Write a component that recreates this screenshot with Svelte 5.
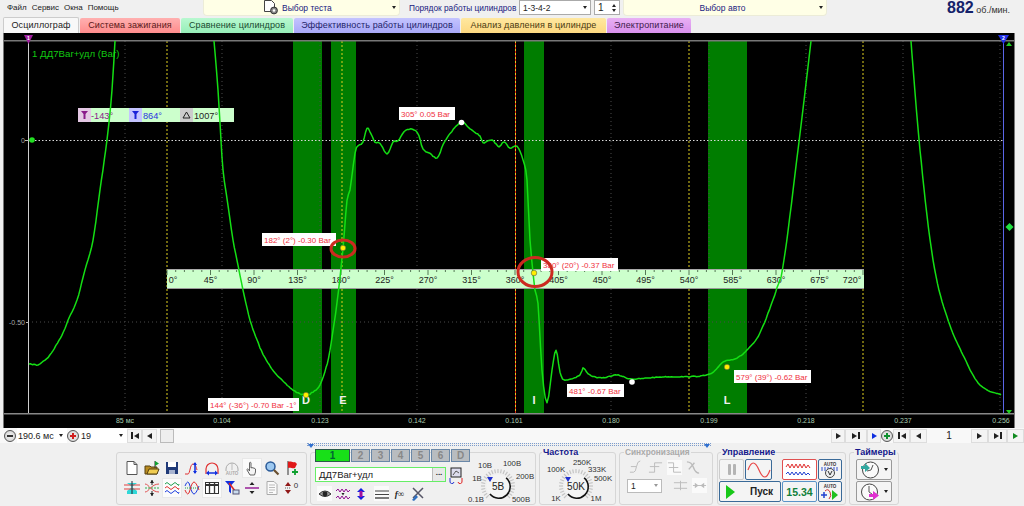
<script>
  const tabs = [
    { name: 'Осциллограф', cls: 't-active', w: 76 },
    { name: 'Система зажигания', cls: 't-red', w: 100 },
    { name: 'Сравнение цилиндров', cls: 't-green', w: 112 },
    { name: 'Эффективность работы цилиндров', cls: 't-blue', w: 166 },
    { name: 'Анализ давления в цилиндре', cls: 't-yellow', w: 145 },
    { name: 'Электропитание', cls: 't-violet', w: 84 }
  ];

  // trace in page coordinates, one list per visible piece
  const pieces = [
    [[29, 364], [34, 364.500], [38, 365], [42, 362], [50, 355], [63, 333], [68, 320], [77, 300], [85, 270], [93, 240], [100, 190], [107, 140], [112, 90], [115, 41]],
    [[214, 41], [218, 90], [221, 140], [223, 170], [228, 205], [233, 240], [237, 260], [243, 290], [250, 320], [257, 340], [265, 358], [277, 375],
      [293, 390], [305, 395], [313, 392], [320, 385], [326, 368], [330, 350], [337, 303], [343, 248], [347, 200], [350, 190], [355, 153], [358, 146], [363, 142],
      [367, 128], [371, 134], [375, 142], [380, 143], [387, 154], [393, 142], [398, 141], [406, 130], [417, 132], [423, 149], [430, 153],
      [437, 158], [443, 145], [446, 140], [452, 131], [462, 122], [470, 129], [480, 136], [483, 143], [492, 140], [499, 147], [504, 142],
      [510, 148], [517, 146], [523, 160], [527, 180], [530, 240], [535, 290], [538, 303], [542, 370], [547, 403], [552, 370], [556, 350],
      [560, 372], [565, 380], [580, 375], [583, 368], [590, 375], [602, 378], [617, 375], [632, 379], [660, 377], [707, 375], [723, 362],
      [737, 358], [747, 350], [760, 333], [777, 288], [784, 260], [798, 150], [811, 41]],
    [[911, 41], [920, 150], [933, 260], [947, 317], [963, 355], [980, 385], [1001, 395]]
  ];

  let seed = 7;
  function rnd() {
    seed = (seed * 16807) % 2147483647;
    return seed / 2147483647 - 0.5;
  }

  // catmull-rom through the points, a little jitter for the sensor noise
  function smooth(pts) {
    let d = `M${pts[0][0]} ${pts[0][1]}`;
    for (let i = 0; i < pts.length - 1; i++) {
      const p0 = pts[Math.max(i - 1, 0)];
      const p1 = pts[i];
      const p2 = pts[i + 1];
      const p3 = pts[Math.min(i + 2, pts.length - 1)];
      const n = Math.max(2, Math.round((p2[0] - p1[0]) / 1.5));
      for (let k = 1; k <= n; k++) {
        const t = k / n;
        const f = (a, b, c, e) =>
          0.5 * (2 * b + (c - a) * t + (2 * a - 5 * b + 4 * c - e) * t * t + (3 * b - a - 3 * c + e) * t * t * t);
        const x = f(p0[0], p1[0], p2[0], p3[0]);
        const y = f(p0[1], p1[1], p2[1], p3[1]) + rnd() * 0.8;
        d += `L${x.toFixed(1)} ${y.toFixed(1)}`;
      }
    }
    return d;
  }
  const wave = pieces.map(smooth).join('');

  const bands = [
    { x: 293, w: 29, l: 'D', lx: 306 },
    { x: 331, w: 25, l: 'E', lx: 343 },
    { x: 524, w: 20, l: 'I', lx: 534 },
    { x: 708, w: 39, l: 'L', lx: 727 }
  ];
  const grid = [125, 222, 320, 417, 611, 709, 806, 903, 1000];
  const yellow = [167, 342, 689, 863];
  const times = [
    [125, '85 мс'], [222, '0.104'], [320, '0.123'], [417, '0.142'], [514, '0.161'],
    [611, '0.180'], [709, '0.199'], [806, '0.218'], [903, '0.237'], [1001, '0.256']
  ];
  const tips = [
    { x: 399, y: 107, w: 56, t: '305° 0.05 Bar' },
    { x: 262, y: 233, w: 74, t: '182° (2°) -0.30 Bar' },
    { x: 541, y: 258, w: 77, t: '380° (20°) -0.37 Bar' },
    { x: 208, y: 398, w: 91, t: '144° (-36°) -0.70 Bar -1°' },
    { x: 567, y: 384, w: 57, t: '481° -0.67 Bar' },
    { x: 734, y: 370, w: 77, t: '579° (39°) -0.62 Bar' }
  ];
  const degs = Array.from({ length: 17 }, (_, i) => i * 45);
  const minorTicks = Array.from({ length: 81 }, (_, i) => 167 + i * 8.7);
  const channels = ['1', '2', '3', '4', '5', '6', 'D'];

  const voltLabels = [
    [21, 16, '10В'], [48, 14, '100В'], [61, 27, '200В'], [57, 50, '500В'], [12, 50, '0.1В'], [13, 29, '1В']
  ];
  const freqLabels = [
    [16, 20, '100K'], [42, 13, '250K'], [57, 20, '333K'], [63, 29, '500K'], [56, 49, '1M'], [16, 49, '1K']
  ];
  const knobTicks = Array.from({ length: 25 }, (_, i) => (i * 270) / 24 - 225);
  const rad = (a) => (a * Math.PI) / 180;
</script>

{#snippet knob(cx, cy, labels, value)}
  <svg class="knob" width="74" height="53" viewBox="0 0 74 53">
    {#each knobTicks as a}
      <line x1={cx + 13 * Math.cos(rad(a))} y1={cy + 13 * Math.sin(rad(a))} x2={cx + 17 * Math.cos(rad(a))} y2={cy + 17 * Math.sin(rad(a))} stroke="#c4c4c4" stroke-width="1.2" />
    {/each}
    <circle {cx} {cy} r="11.5" fill="#f4f4f4" />
    <path d="M{cx + 8.1} {cy - 8.1}A11.5 11.5 0 1 1 {cx - 8.1} {cy + 8.1}" fill="none" stroke="#111" stroke-width="1.6" />
    <path d="M{cx - 11} {cy - 9}h6l-3 5z" fill="#2030d0" />
    <text x={cx} y={cy + 4} class="kv">{value}</text>
    {#each labels as l}
      <text x={l[0]} y={l[1]} class="kl">{l[2]}</text>
    {/each}
  </svg>
{/snippet}

<div class="app">
  <header class="topbar">
    <nav class="menu">
      <span>Файл</span><span>Сервис</span><span>Окна</span><span>Помощь</span>
    </nav>
    <div class="ysel test">
      <svg width="17" height="15" viewBox="0 0 17 15">
        <path d="M1.500 .5h7l3 3v8h-10z" fill="#fff" stroke="#444" />
        <circle cx="11" cy="10.500" r="3.400" fill="#888" stroke="#333" />
        <circle cx="11" cy="10.500" r="1.200" fill="#fff" />
      </svg>
      <span class="ytext">Выбор теста</span>
      <i class="caret"></i>
    </div>
    <span class="order">Порядок работы цилиндров</span>
    <div class="combo order-combo"><span>1-3-4-2</span><i class="caret"></i></div>
    <div class="combo spin"><span>1</span><b class="arrows"><i class="up"></i><i class="caret"></i></b></div>
    <div class="ysel carsel">
      <span class="ytext centered">Выбор авто</span>
      <i class="caret"></i>
    </div>
    <div class="rpm"><strong>882</strong> <span>об./мин.</span></div>
  </header>

  <div class="tabs">
    {#each tabs as tab}
      <div class="tab {tab.cls}" style:width="{tab.w}px">{tab.name}</div>
    {/each}
  </div>

  <div class="scope">
    <svg width="1024" height="395" viewBox="0 33 1024 395">
      <rect x="3" y="33" width="1012" height="395" fill="#000" />
      <rect x="3" y="33" width="1" height="395" fill="#777" />
      <rect x="1014" y="33" width="1" height="395" fill="#777" />
      {#each bands as b}
        <rect x={b.x} y="41" width={b.w} height="372" fill="#007d00" />
      {/each}
      {#each grid as x}
        <line x1={x} y1="41" x2={x} y2="413" class="griddot" />
      {/each}
      <line x1="28" y1="322" x2="1003" y2="322" class="griddot" />
      {#each yellow as x}
        <line x1={x} y1="41" x2={x} y2="413" class="ydash" />
      {/each}
      <line x1="515.500" y1="41" x2="515.500" y2="413" stroke="#e02010" />
      <line x1="515.500" y1="41" x2="515.500" y2="413" class="ydash" />
      <line x1="28" y1="140.500" x2="1003" y2="140.500" class="zero" />

      <rect x="4" y="40" width="1010" height="1.500" fill="#777" />
      <rect x="4" y="413" width="1010" height="1.500" fill="#888" />
      <line x1="28.500" y1="41" x2="28.500" y2="413" stroke="#cfcfcf" />
      <line x1="1003.500" y1="41" x2="1003.500" y2="413" stroke="#5a66e8" />
      <path d="M24 35h9l-4.500 9z" fill="#a020a0" />
      <text x="28.500" y="39.500" class="flag">1</text>
      <path d="M998 35h11l-5.500 9z" fill="#2030e8" />
      <text x="1003.500" y="39.500" class="flag">2</text>
      <path d="M1006 46l3-4 3 4z" fill="#20d020" />
      <path d="M1006 410l3 4 3-4z" fill="#20d020" />
      <path d="M1009.500 223l4 4-4 4-4-4z" fill="#20e040" />

      <path d="M25 140.500h4M26 322.500h3" stroke="#bbb" />
      <text x="25" y="143" class="axis">0</text>
      <text x="25" y="325" class="axis">-0.50</text>
      <circle cx="32" cy="140" r="2.800" fill="#22e022" />
      <text x="32" y="57" class="title">1 ДД7Bar+удл (Bar)</text>

      <g class="measure">
        <rect x="78" y="108" width="156" height="14" fill="#ccffcc" />
        <rect x="78" y="108" width="13" height="14" fill="#e4c8e4" />
        <rect x="129" y="108" width="13" height="14" fill="#c4c4ff" />
        <rect x="180" y="108" width="13" height="14" fill="#cccccc" />
        <path d="M81 111h7l-2.500 3v5h-2v-5z" fill="#8a1a8a" />
        <path d="M132 111h7l-2.500 3v5h-2v-5z" fill="#1a22d8" />
        <path d="M186.500 112l3.500 6h-7z" fill="none" stroke="#222" />
        <text x="91" y="119" fill="#8a208a">-143°</text>
        <text x="143" y="119" fill="#2a30e0">864°</text>
        <text x="194" y="119" fill="#222">1007°</text>
      </g>

      <rect x="167" y="270" width="697" height="18" fill="#ccffcc" />
      <rect x="167" y="288" width="697" height="1" fill="#9a9a9a" />
      <rect x="167" y="269" width="697" height="1" fill="#aaa" />
      {#each minorTicks as x, i}
        <line x1={x} y1="270" x2={x} y2={i % 5 === 0 ? 275 : 272} stroke="#557755" />
      {/each}
      {#each degs as d, i}
        <text x={i === 0 ? 173 : i === 16 ? 852 : 167 + i * 43.5} y="283" class="deg">{d}°</text>
      {/each}

      <path d={wave} fill="none" stroke="#14de14" stroke-width="1.500" stroke-linejoin="round" />

      {#each bands as b}
        <text x={b.lx} y="404" class="band">{b.l}</text>
      {/each}

      <circle cx="461.500" cy="122.500" r="2.800" fill="#fff" />
      <circle cx="632" cy="382" r="2.800" fill="#fff" />
      {#each [[306, 395], [343, 248], [534, 273], [727, 367]] as m}
        <circle cx={m[0]} cy={m[1]} r="2.800" fill="#ffee00" stroke="#444" stroke-width=".5" />
      {/each}

      {#each tips as t}
        <rect x={t.x} y={t.y} width={t.w} height="13" fill="#fff" />
        <text x={t.x + 2} y={t.y + 9.500} class="tip">{t.t}</text>
      {/each}
      <ellipse cx="343" cy="248.500" rx="12" ry="8.500" class="ring" />
      <ellipse cx="535" cy="272" rx="17" ry="14.500" class="ring" />

      {#each times as t}
        <text x={t[0]} y="423" class="timelabel">{t[1]}</text>
      {/each}
    </svg>
  </div>

  <div class="scrollrow">
    <span class="round minus"></span>
    <div class="scombo w45"><span>190.6 мс</span><i class="caret"></i></div>
    <span class="round plus p-red"></span>
    <div class="scombo w47"><span>19</span><i class="caret"></i></div>
    <span class="sbtn"><i class="bar"></i><i class="lt"></i></span>
    <span class="sbtn"><i class="lt"></i></span>
    <span class="thumb"></span>
    <div class="track"></div>
    <span class="sbtn nb"><i class="rt"></i></span>
    <span class="sbtn w22"><i class="rt"></i><i class="bar"></i></span>
    <span class="sbtn nb"><i class="rt r-blue"></i></span>
    <span class="round plus p-green"></span>
    <span class="sbtn w16"><i class="bar"></i><i class="lt"></i></span>
    <span class="sbtn w16"><i class="lt"></i></span>
    <span class="pageno">1</span>
    <span class="sbtn w16"><i class="rt"></i></span>
    <span class="sbtn w18"><i class="rt"></i><i class="bar"></i></span>
    <span class="sbtn w16"><i class="rt r-green"></i></span>
  </div>

  <div class="panel">
    <div class="strip"><i></i><i></i></div>
    <div class="groups">
      <section class="group tools">
        <div class="toolgrid">
          <svg viewBox="0 0 16 16"><path d="M3 1.500h7l3 3v10h-10z" fill="#fff" stroke="#555" /><path d="M10 1.500v3h3" fill="none" stroke="#555" /></svg>
          <svg viewBox="0 0 16 16"><path d="M1 6h5l1 1h6v7h-12z" fill="#b88a20" stroke="#554010" /><path d="M3 14l2-5h10l-2 5z" fill="#f0cc50" stroke="#554010" /><path d="M11 1v7" stroke="#333" /><path d="M11 1l4 2.500-4 2.500z" fill="#10a030" /></svg>
          <svg viewBox="0 0 16 16"><rect x="2" y="2" width="12" height="12" fill="#203a78" /><rect x="4" y="2" width="8" height="5" fill="#fff" /><rect x="5" y="10" width="6" height="4" fill="#a8b4d0" /></svg>
          <svg viewBox="0 0 16 16"><path d="M1 14h3c2 0 2-10 5-10 2 0 3 2 4 6" fill="none" stroke="#e03030" /><path d="M11 3v10" stroke="#1030e0" stroke-width="1.500" /><path d="M9 5l2-3 2 3zM9 11l2 3 2-3z" fill="#1030e0" /></svg>
          <svg viewBox="0 0 16 16"><path d="M2 14v-5a6 6 0 0 1 12 0v5" fill="none" stroke="#e03030" stroke-width="1.200" /><path d="M3 13h10" stroke="#1030e0" stroke-width="1.500" /><path d="M5 10.500l-3 2.500 3 2.500zM11 10.500l3 2.500-3 2.500z" fill="#1030e0" /></svg>
          <svg viewBox="0 0 16 16"><path d="M2 11v-2a6 6 0 0 1 12 0v2" fill="none" stroke="#aaa" /><path d="M8 3v7" stroke="#bbb" /><text x="8" y="15" class="autotxt dis">AUTO</text></svg>
          <span class="on"><svg viewBox="0 0 16 16"><path d="M6 15l-3-5c-.5-1 1-1.500 1.500-.5l1 1.500v-8c0-1 1.500-1 1.500 0v5l1-.5 1 .5 1 0 1.500 1v3l-1 3z" fill="#f4f4f4" stroke="#555" stroke-width=".9" /></svg></span>
          <svg viewBox="0 0 16 16"><circle cx="6.500" cy="6.500" r="4.500" fill="#9cc8f0" stroke="#2a5a98" stroke-width="1.500" /><path d="M10 10l4.500 4.500" stroke="#6a5030" stroke-width="2.200" /></svg>
          <svg viewBox="0 0 16 16"><path d="M4 1v14" stroke="#333" /><path d="M4 2c3-1.500 4 1 7 0l2 2-2 4c-3 1-4-1-7 0z" fill="#e01818" /><path d="M11 9v6M8 12h6" stroke="#10a030" stroke-width="1.800" /></svg>

          <svg viewBox="0 0 16 16"><path d="M3 3l10 8v3h-10v-3l10-8z" fill="#30d8d8" /><path d="M0 5h16M0 9h16" stroke="#e04040" /><path d="M8 1v13" stroke="#223" /></svg>
          <svg viewBox="0 0 16 16"><path d="M1 4c4 0 6 8 14 8M1 12c4 0 6-8 14-8" fill="none" stroke="#e05050" /><path d="M1 8h14" stroke="#30b050" stroke-dasharray="2 1" /><path d="M8 0v5M8 11v5" stroke="#222" /><path d="M6 3l2-3 2 3zM6 13l2 3 2-3z" fill="#222" /></svg>
          <span class="on"><svg viewBox="0 0 16 16"><path d="M1 4q2-3 4 0t4 0 4 0 2 0" fill="none" stroke="#20a050" /><path d="M1 8q2-3 4 0t4 0 4 0 2 0" fill="none" stroke="#e03030" /><path d="M1 12q2-3 4 0t4 0 4 0 2 0" fill="none" stroke="#2040e0" /></svg></span>
          <svg viewBox="0 0 16 16"><path d="M1 6q3-8 5 0t4 8 5-8" fill="none" stroke="#2040e0" /><path d="M1 10q3 8 5 0t4-8 5 8" fill="none" stroke="#e03030" /><path d="M1 8h14" stroke="#20a050" stroke-dasharray="1 1" /></svg>
          <span class="on"><svg viewBox="0 0 16 16"><rect x="1.500" y="2.500" width="13" height="11" fill="#fff" stroke="#333" /><path d="M1 5h14" stroke="#333" stroke-width="2" /><path d="M5.500 3v10M10.500 3v10" stroke="#333" stroke-width="1.300" /></svg></span>
          <svg viewBox="0 0 16 16"><path d="M1 1h10l-4 4.500v8l-2-2v-6z" fill="#1030e0" /><path d="M5 3l6 8" stroke="#e02020" stroke-width="1.500" /><rect x="9" y="10" width="6" height="4" fill="#cde" stroke="#557" /></svg>
          <svg viewBox="0 0 16 16"><path d="M1 8h14" stroke="#901090" stroke-width="1.400" /><path d="M5.500 5l2.500-3 2.500 3zM5.500 11l2.500 3 2.500-3z" fill="#222" /></svg>
          <svg viewBox="0 0 16 16"><path d="M3 1.500h7l3 3v10h-10z" fill="#fafafa" stroke="#aaa" /><path d="M5 5h6M5 7.500h6M5 10h6M5 12.500h4" stroke="#bbb" /></svg>
          <svg viewBox="0 0 16 16"><path d="M1 8h6" stroke="#666" stroke-dasharray="1 1" /><path d="M1 6l3-4 3 4zM1 10l3 4 3-4z" fill="#901818" /><text x="12" y="8" class="zeroicon">0</text></svg>
        </div>
      </section>

      <section class="group chan">
        <div class="chantabs">
          {#each channels as c, i}
            <span class:sel={i === 0}>{c}</span>
          {/each}
        </div>
        <div class="chanbody">
          <div>
            <div class="namebox"><span>ДД7Bar+удл</span><b>...</b></div>
            <div class="chanicons">
              <span class="on"><svg viewBox="0 0 14 14"><path d="M1 7q6-6 12 0-6 5-12 0z" fill="#999" stroke="#333" /><circle cx="7" cy="7" r="2.400" fill="#222" /></svg></span>
              <span><svg viewBox="0 0 14 14"><path d="M0 4l2-2 2 3 2-3 2 3 2-3 2 3 2-2" fill="none" stroke="#901090" /><path d="M0 11l2-2 2 3 2-3 2 3 2-3 2 3 2-2" fill="none" stroke="#901090" /><path d="M5.500 6h3l-1.500 2.500z" fill="#222" /></svg></span>
              <span><svg viewBox="0 0 14 14"><path d="M7 1l-4 4h8zM7 13l-4-4h8z" fill="#1020e0" /><path d="M5.500 4h3v6h-3z" fill="#a010a0" /></svg></span>
              <span class="on wide"><svg viewBox="0 0 14 14"><path d="M0 4h14M0 7.500h14" stroke="#444" /><path d="M0 11h14" stroke="#444" stroke-width="1.400" /></svg></span>
              <span class="fx">f∞</span>
              <span><svg viewBox="0 0 14 14"><path d="M2 1l10 10M12 1l-10 10" stroke="#556" stroke-width="1.500" /><path d="M1 13l4-5 2 2-4 4z" fill="#3070c0" /></svg></span>
            </div>
          </div>
          <svg class="swap" width="16" height="18" viewBox="0 0 16 18">
            <rect x="3" y="1" width="10" height="9" fill="#dde" stroke="#222" />
            <path d="M5 8l3-4 3 2" fill="none" stroke="#555" />
            <path d="M2 11v3a2 2 0 0 0 4 1" fill="none" stroke="#2030d0" />
            <path d="M14 11v3a2 2 0 0 1-4 1" fill="none" stroke="#e02020" />
          </svg>
          <div class="voltknob">{@render knob(34, 34, voltLabels, '5В')}</div>
        </div>
      </section>

      <section class="group freq">
        <h3>Частота</h3>
        <div class="freqknob">{@render knob(36, 34, freqLabels, '50K')}</div>
      </section>

      <section class="group sync">
        <h3 class="off">Синхронизация</h3>
        <div class="syncrow">
          <svg viewBox="0 0 16 16"><path d="M1 13h4q2 0 3-6t4-6M2 7h6" fill="none" stroke="#bbb" /></svg>
          <svg viewBox="0 0 16 16"><path d="M1 13h6V3h8M2 7h10" fill="none" stroke="#bbb" /></svg>
          <svg class="lit" viewBox="0 0 16 16"><path d="M1 3h6v10h8M2 8h10" fill="none" stroke="#bbb" /></svg>
          <svg viewBox="0 0 16 16"><path d="M1 2q5 0 7 6t6 6M3 10l6-7" fill="none" stroke="#bbb" stroke-width="1.500" /></svg>
        </div>
        <div class="syncrow second">
          <div class="combo dis"><span>1</span><i class="caret"></i></div>
          <svg viewBox="0 0 16 16"><path d="M1 5h14M1 11h14M8 3v10" fill="none" stroke="#bbb" /></svg>
          <svg class="lit" viewBox="0 0 16 16"><path d="M1 8h14" stroke="#bbb" /><path d="M3 5l4 3-4 3zM13 5l-4 3 4 3z" fill="#bbb" /></svg>
        </div>
      </section>

      <section class="group ctrl">
        <h3>Управление</h3>
        <div class="ctrlgrid">
          <div class="cbtn pause"><i></i><i></i></div>
          <div class="cbtn sine"><svg width="24" height="16" viewBox="0 0 24 16"><path d="M1 8q5-14 11 0t11 0" fill="none" stroke="#e84848" stroke-width="1.200" /></svg></div>
          <div class="cbtn sig"><svg width="30" height="16" viewBox="0 0 30 16"><path d="M1 5l2-3 2 4 2-4 2 4 2-4 2 4 2-4 2 4 2-4 2 4 2-3 2 3" fill="none" stroke="#e03030" /><path d="M1 12l2-2 2 3 2-3 2 3 2-3 2 3 2-3 2 3 2-3 2 3 2-2 2 2" fill="none" stroke="#2040d0" /></svg></div>
          <div class="cbtn autob"><svg width="20" height="18" viewBox="0 0 20 18"><text x="10" y="5" class="autotxt">AUTO</text><path d="M1 7h18M1 9h18" stroke="#3050d0" stroke-dasharray="2 1" /><circle cx="10" cy="12" r="4.500" fill="#eee" stroke="#444" /><path d="M8 10l2 4 2-4" fill="none" stroke="#333" /></svg></div>
          <div class="cbtn start"><i></i><span>Пуск</span></div>
          <div class="cbtn clock">15.34</div>
          <div class="cbtn autob"><svg width="20" height="18" viewBox="0 0 20 18"><text x="10" y="5" class="autotxt">AUTO</text><path d="M1 12h6M4 9v6" stroke="#2040d0" stroke-width="1.500" /><path d="M5 8q3-3 5 1t-1 7" fill="none" stroke="#d03030" /><path d="M12 7l6 5-6 5z" fill="#20c020" /></svg></div>
        </div>
      </section>

      <section class="group timers">
        <h3>Таймеры</h3>
        <div class="tbtn">
          <svg width="21" height="18" viewBox="0 0 21 18"><circle cx="10.500" cy="9" r="8" fill="#fafafa" stroke="#444" /><path d="M11 9l2-5M11 9l-4 1" stroke="#555" /><path d="M1 5h4V2l5 5-5 4V8H1z" fill="#30a8a0" /></svg>
          <i class="caret"></i>
        </div>
        <div class="tbtn">
          <svg width="21" height="18" viewBox="0 0 21 18"><circle cx="9.500" cy="9" r="8" fill="#fafafa" stroke="#444" /><path d="M9 9V3M9 9l3 2" stroke="#555" /><path d="M9 11h4V8l6 4.500-6 4.500v-3H9z" fill="#e030d0" /></svg>
          <i class="caret"></i>
        </div>
      </section>
    </div>
  </div>
</div>

<style>
  :global(body) {
    margin: 0;
    background: #f0f0f0;
  }

  .app {
    width: 1024px;
    height: 506px;
    overflow: hidden;
    display: flex;
    flex-direction: column;
    font-family: 'Liberation Sans', Arial, sans-serif;
    font-size: 9px;
    color: #222;
  }

  /* top bar */
  .topbar {
    height: 17px;
    flex: none;
    display: flex;
    align-items: flex-start;
  }
  .menu {
    width: 204px;
    padding: 3px 0 0 7px;
    box-sizing: border-box;
    display: flex;
    gap: 5px;
    font-size: 8px;
  }
  .ysel {
    height: 15px;
    display: flex;
    align-items: center;
    background: #ffffe6;
    border-radius: 0 0 3px 3px;
    box-shadow: 0 0 0 1px #ececd8;
    box-sizing: border-box;
    padding-right: 3px;
    color: #1a1a80;
    font-size: 8.500px;
  }
  .test {
    width: 195px;
    padding-left: 59px;
  }
  .ytext {
    flex: 1;
    padding-left: 2px;
  }
  .centered {
    text-align: center;
  }
  .carsel {
    width: 202px;
    margin-left: 4px;
  }
  .order {
    margin: 3px 0 0 10px;
    width: 110px;
    color: #1a1a80;
    font-size: 8.300px;
    white-space: nowrap;
  }
  .caret {
    display: inline-block;
    width: 0;
    height: 0;
    border: 2.500px solid transparent;
    border-top: 3px solid #222;
    border-bottom: 0;
  }
  .combo {
    height: 15px;
    box-sizing: border-box;
    background: #fff;
    border: 1px solid #aaa;
    display: flex;
    align-items: center;
    justify-content: space-between;
    padding: 0 3px;
    font-size: 8.500px;
  }
  .order-combo {
    width: 72px;
  }
  .spin {
    width: 26px;
    margin-left: 3px;
    font-size: 10px;
  }
  .arrows {
    display: flex;
    flex-direction: column;
    gap: 2px;
  }
  .up {
    width: 0;
    height: 0;
    border: 2.500px solid transparent;
    border-bottom: 3px solid #222;
    border-top: 0;
  }
  .rpm {
    margin-left: 121px;
    white-space: nowrap;
    color: #333;
    font-size: 9px;
    line-height: 15px;
  }
  .rpm strong {
    font-size: 16px;
    color: #14226a;
  }

  /* tabs */
  .tabs {
    height: 16px;
    flex: none;
    display: flex;
    padding-left: 3px;
    gap: 1px;
  }
  .tab {
    height: 15px;
    margin-top: 1px;
    box-sizing: border-box;
    border-radius: 2px 2px 0 0;
    text-align: center;
    font-size: 9px;
    line-height: 15px;
    letter-spacing: 0.100px;
    white-space: nowrap;
  }
  .t-active {
    background: #f8f8f8;
    border: 1px solid #ccc;
    border-bottom: 0;
    height: 16px;
    margin-top: 0;
  }
  .t-red {
    background: linear-gradient(#ffb0b0, #ff8c8c);
    color: #5a1818;
  }
  .t-green {
    background: linear-gradient(#b8f8d0, #96eeb8);
    color: #184a30;
  }
  .t-blue {
    background: linear-gradient(#c4c4ff, #a8a8f8);
    color: #24246a;
  }
  .t-yellow {
    background: linear-gradient(#ffe8a0, #fdd880);
    color: #4a3a10;
  }
  .t-violet {
    background: linear-gradient(#e8b0f4, #d890ec);
    color: #401a4a;
  }

  /* scope */
  .scope {
    height: 395px;
    flex: none;
    overflow: hidden;
  }
  .scope svg {
    display: block;
  }
  .griddot {
    stroke: #4a4a4a;
    stroke-dasharray: 1 3;
  }
  .ydash {
    stroke: #e0d020;
    stroke-dasharray: 2 2;
  }
  .zero {
    stroke: #d8d8d8;
    stroke-dasharray: 1.500 2;
  }
  .flag {
    fill: #fff;
    font-size: 5px;
    font-weight: bold;
    text-anchor: middle;
  }
  .axis {
    fill: #aaa;
    font-size: 7px;
    text-anchor: end;
  }
  .title {
    fill: #12c812;
    font-size: 9.700px;
  }
  .measure text {
    font-size: 9.200px;
  }
  .deg {
    fill: #222;
    font-size: 9px;
    text-anchor: middle;
  }
  .band {
    fill: #f0f0f0;
    font-size: 11px;
    font-weight: bold;
    text-anchor: middle;
  }
  .tip {
    fill: #f03040;
    font-size: 8px;
  }
  .ring {
    fill: none;
    stroke: #cc2a20;
    stroke-width: 3;
  }
  .timelabel {
    fill: #a8ccb0;
    font-size: 7px;
    text-anchor: middle;
  }

  /* scroll row */
  .scrollrow {
    height: 15px;
    flex: none;
    display: flex;
    align-items: center;
    background: #f8f8f8;
    padding-left: 4px;
  }
  .round {
    width: 12px;
    height: 12px;
    box-sizing: border-box;
    border-radius: 50%;
    border: 1px solid #555;
    background: radial-gradient(#f4f4f4, #ccc);
    flex: none;
    position: relative;
  }
  .round::after {
    content: '';
    position: absolute;
    left: 2px;
    right: 2px;
    top: 4px;
    height: 2px;
    background: #333;
  }
  .p-red::after,
  .p-red::before {
    background: #d02020;
  }
  .p-green::after,
  .p-green::before {
    background: #109030;
  }
  .plus::before {
    content: '';
    position: absolute;
    top: 2px;
    bottom: 2px;
    left: 4px;
    width: 2px;
  }
  .scombo {
    height: 15px;
    box-sizing: border-box;
    background: #fff;
    display: flex;
    align-items: center;
    justify-content: space-between;
    padding: 0 4px 0 1px;
    font-size: 9px;
    flex: none;
  }
  .w45 {
    width: 50px;
    margin-left: 1px;
  }
  .w47 {
    width: 47px;
    margin-left: 1px;
  }
  .sbtn {
    width: 15px;
    height: 14px;
    flex: none;
    box-sizing: border-box;
    border: 1px solid #ddd;
    background: #f4f4f4;
    display: flex;
    align-items: center;
    justify-content: center;
    gap: 1px;
  }
  .nb {
    width: 14px;
  }
  .w16 {
    width: 17px;
  }
  .w18 {
    width: 19px;
  }
  .w22 {
    width: 22px;
  }
  .bar {
    width: 2px;
    height: 7px;
    background: #222;
  }
  .lt {
    width: 0;
    height: 0;
    border: 3.500px solid transparent;
    border-right: 5px solid #222;
    border-left: 0;
  }
  .rt {
    width: 0;
    height: 0;
    border: 3.500px solid transparent;
    border-left: 5px solid #222;
    border-right: 0;
  }
  .r-blue {
    border-left-color: #1030e0;
  }
  .r-green {
    border-left-color: #108a20;
  }
  .thumb {
    width: 14px;
    height: 14px;
    flex: none;
    margin-left: 3px;
    box-sizing: border-box;
    border: 1px solid #bbb;
    background: #eee;
  }
  .track {
    flex: 1;
  }
  .pageno {
    width: 44px;
    flex: none;
    text-align: center;
    font-size: 10px;
  }

  /* bottom panel */
  .panel {
    flex: 1;
    display: flex;
    flex-direction: column;
  }
  .strip {
    width: 404px;
    height: 3px;
    margin: 0 0 6px 307px;
    box-sizing: border-box;
    border: 1px dotted #7c9ccc;
    display: flex;
    justify-content: space-between;
  }
  .strip i {
    width: 0;
    height: 0;
    border: 3px solid transparent;
    border-top: 4px solid #3070d0;
    border-bottom: 0;
  }
  .groups {
    display: flex;
    height: 53px;
    margin-left: 116px;
    gap: 3px;
  }
  .group {
    box-sizing: border-box;
    border: 1px solid #d6d6d6;
    border-radius: 3px;
    flex: none;
  }
  .group h3 {
    margin: -6px 0 0 2px;
    font-size: 9px;
    line-height: 11px;
    color: #14188c;
    background: #f0f0f0;
    width: fit-content;
    padding: 0 1px;
  }
  .group h3.off {
    color: #aaa;
    font-size: 8.300px;
    margin-left: 4px;
  }
  .timers h3 {
    margin-left: -2px;
  }
  .tools {
    width: 191px;
    padding: 5px 0 0 5px;
  }
  .toolgrid {
    display: grid;
    grid-template-columns: repeat(9, 20px);
    grid-auto-rows: 20px;
    justify-items: center;
    align-items: center;
  }
  .toolgrid svg {
    width: 16px;
    height: 16px;
    display: block;
  }
  .toolgrid span.on {
    background: #fbfbfb;
    padding: 1px;
    box-shadow: 0 0 0 1px #e8e8e8;
  }
  .autotxt {
    font-size: 4.500px;
    font-weight: bold;
    text-anchor: middle;
    fill: #333;
  }
  .autotxt.dis {
    fill: #aaa;
  }
  .zeroicon {
    font-size: 8px;
    text-anchor: middle;
    fill: #333;
  }
  .chan {
    width: 226px;
    padding-left: 4px;
  }
  .chantabs {
    display: flex;
    gap: 1px;
    margin-top: -4px;
  }
  .chantabs span {
    width: 19px;
    height: 13px;
    box-sizing: border-box;
    background: #b8bcc0;
    border: 1px solid #6a88a8;
    color: #888;
    font-size: 10px;
    font-weight: bold;
    text-align: center;
    line-height: 12px;
  }
  .chantabs .sel {
    width: 35px;
    background: #18e018;
    color: #063;
    border-color: #2a5a4a;
  }
  .chanbody {
    display: flex;
    margin-top: 5px;
  }
  .namebox {
    width: 131px;
    height: 15px;
    box-sizing: border-box;
    background: #fff;
    border: 1px solid #66ee66;
    display: flex;
    justify-content: space-between;
    align-items: center;
    padding-left: 3px;
    font-size: 9.500px;
  }
  .namebox b {
    width: 12px;
    height: 13px;
    background: #e8e8e8;
    border-left: 1px solid #bbb;
    font-size: 8px;
    line-height: 9px;
    text-align: center;
  }
  .chanicons {
    display: flex;
    gap: 3px;
    margin-top: 4px;
    padding-left: 2px;
    align-items: center;
  }
  .chanicons span {
    width: 15px;
    height: 15px;
    display: flex;
    align-items: center;
    justify-content: center;
  }
  .chanicons svg {
    width: 14px;
    height: 14px;
  }
  .chanicons .on {
    background: #fafafa;
  }
  .chanicons .wide {
    margin-left: 3px;
  }
  .fx {
    font-family: 'Liberation Serif', serif;
    font-style: italic;
    font-weight: bold;
    font-size: 9px;
  }
  .swap {
    margin: 0 0 0 2px;
    flex: none;
  }
  .knob {
    display: block;
    overflow: visible;
  }
  .voltknob {
    flex: none;
    margin-top: -15px;
  }
  .kv {
    font-size: 10px;
    text-anchor: middle;
    fill: #222;
  }
  .kl {
    font-size: 7.800px;
    text-anchor: middle;
    fill: #333;
  }
  .freq {
    width: 77px;
  }
  .freqknob {
    margin-top: -6px;
  }
  .sync {
    width: 94px;
  }
  .syncrow {
    display: flex;
    gap: 4px;
    padding: 2px 0 0 9px;
  }
  .syncrow svg {
    width: 15px;
    height: 15px;
    flex: none;
  }
  .syncrow .lit {
    background: #fafafa;
  }
  .second {
    padding: 3px 0 0 7px;
    align-items: center;
  }
  .combo.dis {
    width: 35px;
    height: 14px;
    margin-right: 7px;
    border-color: #bbb;
    flex: none;
  }
  .combo.dis .caret {
    border-top-color: #999;
  }
  .ctrl {
    width: 129px;
    padding-left: 1px;
    margin-left: 1px;
  }
  .ctrlgrid {
    display: grid;
    grid-template-columns: 25px 27px 8px 35px 24px;
    grid-template-rows: 21px 21px;
    column-gap: 1px;
    row-gap: 1px;
    margin-top: 1px;
  }
  .cbtn {
    box-sizing: border-box;
    border: 1px solid #888;
    border-radius: 2px;
    background: #f4f4f4;
    display: flex;
    align-items: center;
    justify-content: center;
  }
  .pause {
    gap: 2px;
    border-color: #ccc;
  }
  .pause i {
    width: 3px;
    height: 11px;
    background: #b4b4b4;
    border-radius: 1px;
  }
  .sine {
    border-color: #3a6a98;
  }
  .sig {
    grid-column: 4;
    border-color: #e05050;
    background: #fff;
  }
  .autob {
    border-color: #3a6a98;
  }
  .start {
    grid-column: 1 / 4;
    border-color: #3a6a98;
    justify-content: flex-start;
    padding-left: 6px;
    gap: 15px;
    font-weight: bold;
    font-size: 10px;
  }
  .start i {
    width: 0;
    height: 0;
    border: 7px solid transparent;
    border-left: 9px solid #18c818;
    border-right: 0;
  }
  .clock {
    border-color: #5a94c8;
    color: #10803a;
    font-weight: bold;
    font-size: 10.500px;
  }
  .timers {
    width: 50px;
    padding-left: 6px;
  }
  .tbtn {
    width: 36px;
    height: 21px;
    box-sizing: border-box;
    border: 1px solid #999;
    border-radius: 2px;
    background: #f4f4f4;
    display: flex;
    align-items: center;
    justify-content: center;
    gap: 3px;
    margin-top: 1px;
  }
</style>
